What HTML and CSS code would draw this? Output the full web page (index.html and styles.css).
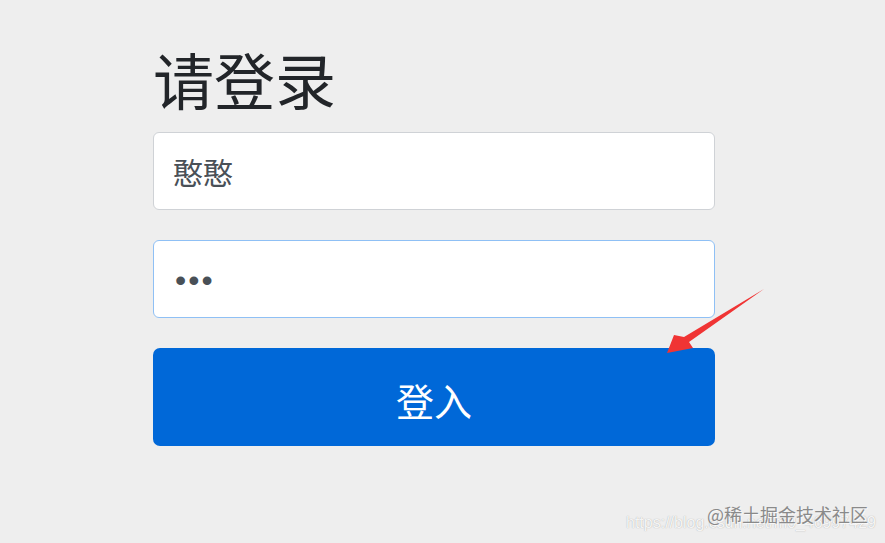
FILE: index.html
```html
<!DOCTYPE html>
<html lang="zh">
<head>
<meta charset="utf-8">
<title>请登录</title>
<link rel="stylesheet" href="styles.css">
</head>
<body>
<main class="page">
  <form class="login">
    <h1 class="title">请登录</h1>
    <input class="field" type="text" value="憨憨">
    <input class="field field-focus" type="password" value="abc">
    <button class="submit" type="button">登入</button>
  </form>
</main>
<svg class="arrow" width="110" height="75" viewBox="0 0 110 75">
  <path d="M106 3 L26 51 L16 49 L9 67 L35 62 L31 56 Z" fill="#f03434"/>
</svg>
<div class="watermark">
  <span class="wm-url">https://blog.csdn.net/m0_46997429</span>
  <span class="wm-brand">@稀土掘金技术社区</span>
</div>
</body>
</html>
```

FILE: styles.css
```css
html, body {
  margin: 0;
  padding: 0;
  background: #eeeeee;
  width: 885px;
  height: 543px;
  overflow: hidden;
  font-family: "Noto Sans CJK SC", "Noto Sans", sans-serif;
}

.page {
  padding: 43px 0 0 153px;
}

.login {
  width: 562px;
  display: flex;
  flex-direction: column;
}

.title {
  margin: 0 0 17px 0;
  font-size: 61px;
  line-height: 72px;
  font-weight: 400;
  color: #222529;
}

.field {
  box-sizing: border-box;
  height: 78px;
  width: 100%;
  margin: 0 0 30px 0;
  padding: 0 19px;
  border: 1px solid #cfd2d6;
  border-radius: 6px;
  background: #fff;
  font-family: "Noto Sans CJK SC", "Noto Sans", sans-serif;
  font-size: 30px;
  color: #495057;
  outline: none;
}

.field-focus {
  border-color: #8fc0f5;
  font-family: "Liberation Sans", Arial, sans-serif;
  font-size: 32px;
  letter-spacing: 2px;
  padding-left: 21px;
  padding-top: 3px;
}

.submit {
  box-sizing: border-box;
  height: 98px;
  width: 100%;
  border: 0;
  border-radius: 7px;
  background: #0068d8;
  color: #fff;
  font-family: "Noto Sans CJK SC", "Noto Sans", sans-serif;
  font-size: 38px;
  padding-top: 6px;
  cursor: pointer;
}

.arrow {
  position: absolute;
  left: 658px;
  top: 286px;
}

.watermark {
  position: absolute;
  left: 626px;
  top: 500px;
  width: 259px;
  height: 40px;
}

.wm-url {
  position: absolute;
  left: 0;
  top: 14px;
  font-family: "Liberation Sans", Arial, sans-serif;
  font-size: 16px;
  color: rgba(255, 255, 255, 0.9);
  text-shadow: 0 0 1px rgba(110, 110, 110, 0.6);
  white-space: nowrap;
}

.wm-brand {
  position: absolute;
  left: 81px;
  top: 2px;
  font-family: "Noto Sans CJK SC", sans-serif;
  font-size: 18px;
  line-height: 24px;
  color: #8a8a8a;
  text-shadow: 1px 1px 0 rgba(255, 255, 255, 0.7);
  white-space: nowrap;
}
```
